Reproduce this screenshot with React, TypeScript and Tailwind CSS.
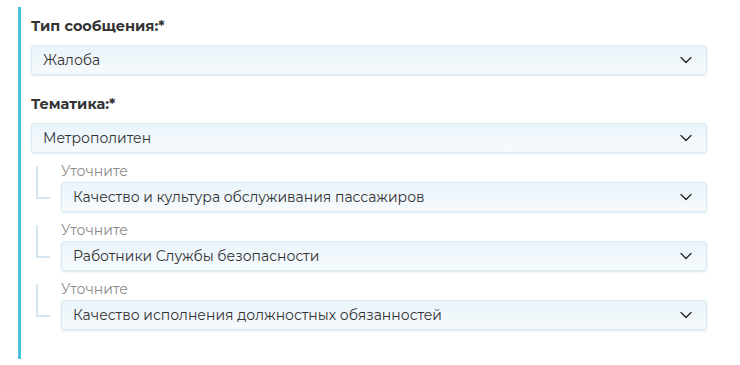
import React from 'react';
import { ChevronDown } from 'lucide-react';

const font = { fontFamily: 'Montserrat, Inter, "Noto Sans", sans-serif' };

function Select({ value }: { value: string }) {
  return (
    <div className="flex h-[30px] items-center justify-between rounded-[3px] border border-[#d9eaf4] bg-gradient-to-b from-[#eaf4fa] to-[#f6fafd] pl-[11px] pr-[10px] shadow-[0_1px_2px_rgba(120,170,200,0.25)]">
      <span className="text-[14px] text-[#333]">{value}</span>
      <ChevronDown className="h-[20px] w-[20px] text-[#222]" strokeWidth={1.5} />
    </div>
  );
}

function SubSelect({ value }: { value: string }) {
  return (
    <div className="flex">
      <div className="w-[30px] shrink-0">
        <div className="ml-[5px] mt-[4px] h-[33px] w-[14px] border-b-2 border-l-2 border-[#d4e7f1]" />
      </div>
      <div className="flex-1">
        <div className="text-[14px] leading-[18px] text-[#8a8a8a]">Уточните</div>
        <div className="mt-[2px]">
          <Select value={value} />
        </div>
      </div>
    </div>
  );
}

export default function App() {
  return (
    <div className="h-[365px] w-[740px] bg-white pt-[7px]" style={font}>
      <div className="ml-[18px] mr-[33px] border-l-[3px] border-[#48c2dc] pb-[29px] pl-[10px] pt-[9px]">
        <div className="text-[14.5px] font-bold leading-[20px] text-[#333]">Тип сообщения:*</div>
        <div className="mt-[9px]">
          <Select value="Жалоба" />
        </div>
        <div className="mt-[19px] text-[14.5px] font-bold leading-[20px] text-[#333]">Тематика:*</div>
        <div className="mt-[9px]">
          <Select value="Метрополитен" />
        </div>
        <div className="mt-[9px] flex flex-col gap-[9px]">
          <SubSelect value="Качество и культура обслуживания пассажиров" />
          <SubSelect value="Работники Службы безопасности" />
          <SubSelect value="Качество исполнения должностных обязанностей" />
        </div>
      </div>
    </div>
  );
}
